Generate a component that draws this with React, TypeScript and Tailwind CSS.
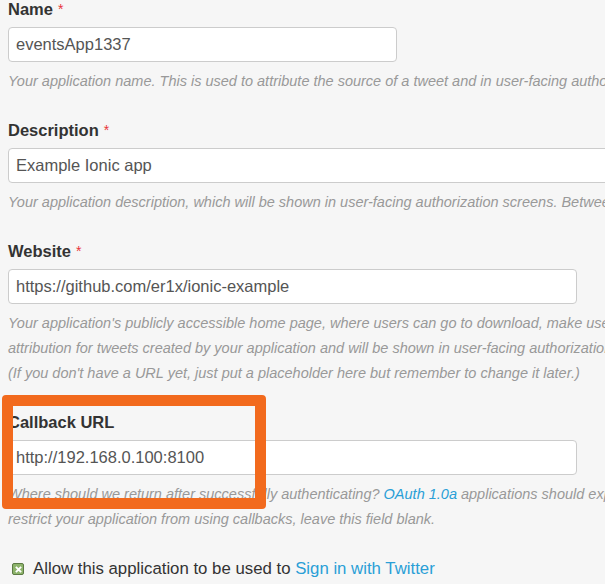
const FONT = { fontFamily: '"Liberation Sans", Arial, sans-serif' };

function Field({
  label,
  required,
  value,
  inputClass,
  help,
}: {
  label: string;
  required?: boolean;
  value: string;
  inputClass: string;
  help: React.ReactNode[];
}) {
  return (
    <div className="mb-[26px]">
      <label className="block h-5 mb-[8px] text-[16.5px] leading-5 font-bold text-[#333]">
        {label}
        {required && <span className="ml-[5px] text-[14px] font-normal text-[#e8343a] align-top">*</span>}
      </label>
      <div
        className={`h-[35px] bg-white border border-[#cccccc] rounded-[4px] px-[7px] flex items-center text-[16.5px] text-[#555] ${inputClass}`}
      >
        {value}
      </div>
      <div className="mt-[7px] text-[14.5px] leading-[25px] italic text-[#999]">
        {help.map((line, i) => (
          <div key={i} className="whitespace-nowrap">
            {line}
          </div>
        ))}
      </div>
    </div>
  );
}

export default function App() {
  return (
    <div className="relative w-[605px] h-[584px] overflow-hidden bg-[#f6f6f6]" style={FONT}>
      <div className="w-[900px] pl-2 -mt-px">
        <Field
          label="Name"
          required
          value="eventsApp1337"
          inputClass="w-[389px]"
          help={[
            "Your application name. This is used to attribute the source of a tweet and in user-facing authorization screens. 32 characters max.",
          ]}
        />
        <Field
          label="Description"
          required
          value="Example Ionic app"
          inputClass="w-[760px]"
          help={[
            "Your application description, which will be shown in user-facing authorization screens. Between 10 and 200 characters max.",
          ]}
        />
        <Field
          label="Website"
          required
          value="https://github.com/er1x/ionic-example"
          inputClass="w-[569px]"
          help={[
            "Your application's publicly accessible home page, where users can go to download, make use of, or find out more information about your application. This fully-qualified URL is used in the source",
            "attribution for tweets created by your application and will be shown in user-facing authorization screens.",
            "(If you don't have a URL yet, just put a placeholder here but remember to change it later.)",
          ]}
        />
        <Field
          label="Callback URL"
          value="http://192.168.0.100:8100"
          inputClass="w-[569px]"
          help={[
            <>
              Where should we return after successfully authenticating?{" "}
              <span className="text-[#2a9fd6]">OAuth 1.0a</span> applications should explicitly specify their
              oauth_callback URL on the request token step, regardless of the value given here. To
            </>,
            "restrict your application from using callbacks, leave this field blank.",
          ]}
        />
        <div className="-mt-px flex items-center h-6 text-[16.8px] text-[#333]">
          <span className="ml-[4px] mr-[9px] w-[12px] h-[12px] rounded-[2px] border border-[#5c7a44] bg-[#8db36b] flex items-center justify-center">
            <svg viewBox="0 0 8 8" className="w-[7px] h-[7px]">
              <path d="M1 1 L7 7 M7 1 L1 7" stroke="white" strokeWidth="2.2" />
            </svg>
          </span>
          Allow this application to be used to&nbsp;
          <span className="text-[#2a9fd6]">Sign in with Twitter</span>
        </div>
      </div>
      <div className="absolute left-[2px] top-[395px] w-[264px] h-[114px] border-[11px] border-[#f26a1d] rounded-[4px]" />
    </div>
  );
}
